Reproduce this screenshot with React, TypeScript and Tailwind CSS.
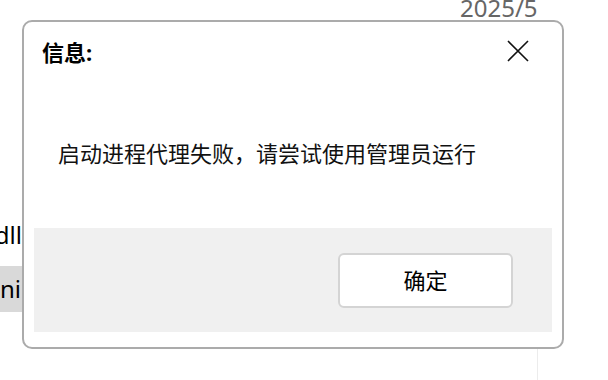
import React from "react";

const FONT = {
  fontFamily: '"Noto Sans", "Noto Sans CJK SC", sans-serif',
};

function CloseIcon() {
  return (
    <svg width="24" height="24" viewBox="0 0 24 24" fill="none">
      <path d="M2 2 L22 22 M22 2 L2 22" stroke="#111" strokeWidth="1.6" />
    </svg>
  );
}

export default function App() {
  return (
    <div
      className="relative w-[608px] h-[380px] overflow-hidden bg-white"
      style={FONT}
    >
      {/* window behind the dialog */}
      <div className="flex h-full">
        <div className="flex w-[537px] flex-col">
          <div className="-mt-[7px] pl-[460px] text-[24px] leading-[30px] text-[#666666]">
            2025/5
          </div>
          <div className="mt-[197px] flex h-[30px] w-[22px] justify-end overflow-hidden text-[24px] leading-[30px] text-black">
            dll
          </div>
          <div className="mt-[16px] flex h-[46px] w-[120px] items-center bg-[#d9d9d9] text-[24px] leading-[30px] text-black">
            <span>ni</span>
          </div>
        </div>
        <div className="mt-[349px] w-px bg-[#ececec]" />
      </div>

      {/* message dialog */}
      <div className="absolute left-[22px] top-[20px] flex h-[329px] w-[542px] flex-col rounded-[10px] border-2 border-[#ababab] bg-white">
        <div className="flex items-start justify-between pl-[18px] pr-[32px] pt-[15px]">
          <div className="text-[22px] font-bold leading-[30px] text-black">
            信息:
          </div>
          <div className="pt-[2px]">
            <CloseIcon />
          </div>
        </div>
        <div className="mt-[71px] pl-[34px] text-[22px] leading-[30px] text-[#111]">
          启动进程代理失败，请尝试使用管理员运行
        </div>
        <div className="mx-[10px] mb-[15px] mt-auto flex h-[104px] items-center justify-end bg-[#f0f0f0] pr-[39px]">
          <button className="flex h-[55px] w-[175px] items-center justify-center rounded-[6px] border-2 border-[#d4d4d4] bg-white text-[22px] leading-[30px] text-black">
            确定
          </button>
        </div>
      </div>
    </div>
  );
}
